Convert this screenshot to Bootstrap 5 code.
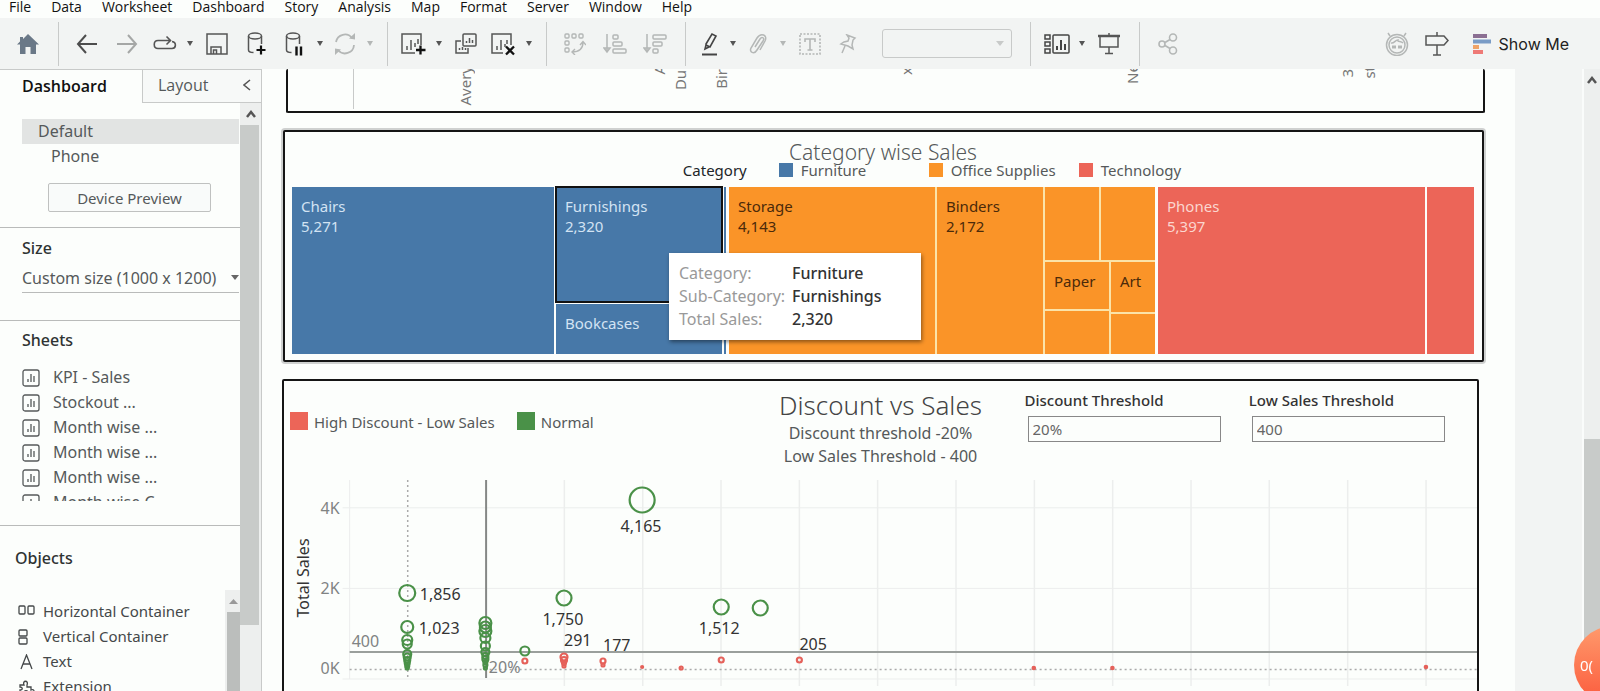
<!DOCTYPE html>
<html lang="en">
<head>
<meta charset="utf-8">
<meta name="viewport" content="width=device-width, initial-scale=1">
<title>Dashboard</title>
<link href="https://cdn.jsdelivr.net/npm/bootstrap@5.3.0/dist/css/bootstrap.min.css" rel="stylesheet">
<style>
:root{--paper:#fcfefc;--chrome:#f2f4f3;--line:#c8cac9;--ink:#55595a;--blue:#4778a8;--orange:#fa9428;--red:#ec6558;--green:#4a9148}
body{font-family:"Noto Sans","Open Sans",sans-serif;font-size:15px;line-height:20px;background:var(--paper);color:var(--ink)}
svg{display:block}
button{font:inherit;color:inherit}
.menu-strip{height:18px;padding-left:9px;gap:20px;font:14px/14px "Open Sans",sans-serif}
.menu-strip a{color:#111;text-decoration:none}
.tool-strip{height:51px;background:var(--chrome);padding-left:8px;color:#555}
.tool-strip button{background:none;border:0;padding:0;height:40px;display:flex;align-items:center;justify-content:center;flex:none}
.w-a{width:40px}.w-b{width:36px}.w-c{width:32px}.w-d{width:14px}
.faded{color:#b4b7b6}
.tool-sep{width:1px;height:44px;background:var(--line);margin:0 8px 0 10px;flex:none}
.caret::after{content:"";border:3px solid transparent;border-top:5px solid currentColor;border-bottom:0}
.tool-select{width:130px;height:29px;margin:0 8px 0 16px;border:1px solid var(--line);border-radius:3px;background:transparent;appearance:none}
.select-box{display:grid;align-items:center}
.select-box>*{grid-area:1/1}
.select-box::after{content:"";grid-area:1/1;justify-self:end;border:4px solid transparent;border-top:5px solid #666;border-bottom:0;pointer-events:none}
.select-box.off::after{border-top-color:#c8cac9;margin-right:16px}
.show-me{padding:0 31px 0 16px!important;gap:8px;font-family:Inter,sans-serif!important;font-size:16px!important;color:#222}
.side{width:262px;border-top:1px solid var(--line);border-right:1px solid var(--line);font-size:16px}
.side-tabs{height:33px;font:16px/24px "Open Sans",sans-serif}
.side-tabs button{background:none;border:0;text-align:left}
.tab-on{width:142px;padding:0 0 2px 22px;font-weight:600!important;color:#111}
.tab-off{background:#f7f9f8!important;border-left:1px solid var(--line)!important;border-bottom:1px solid var(--line)!important;padding:0 10px 2px 15px}
.side-body{width:240px}
.side h2{font-size:16px;line-height:24px;font-weight:500;color:#2f3333;margin:0}
.side section{border-bottom:1px solid #b9bbba}
.head-size{padding:8px 0 0 22px}
.head-sheets{padding:7px 0 0 22px}
.head-objects{padding:20px 0 0 15px}
.dev-part{padding-top:16px}
.dev{height:25px;line-height:25px;width:217px;margin-left:22px;padding-left:16px}
.dev.on{background:#e2e4e3}
.dev.sub{padding-left:29px}
.preview-btn{margin:14px 0 15px 48px;width:163px;height:29px;border:1px solid #bfc1c0;background:#f9fbfa;border-radius:2px;padding:0;font-size:15px}
.size-box{margin:3px 0 27px 22px;width:217px;border-bottom:1px solid #b9bbba}
.size-box select{appearance:none;border:0;background:none;color:inherit;height:29px;padding:0}
.sheet-list{height:136px;overflow:hidden;padding-left:22px;margin:13px 0 24px}
.sheet-list li,.obj-list li{height:25px;line-height:25px;display:flex;align-items:center}
.sheet-list li{gap:13px}
.obj-list{padding-left:18px;flex:1;margin:9px 0 0;font-size:15px}
.obj-list li{gap:7px;color:#444849}
.sbar{width:21px;background:#edefee}
.sbar-up{height:22px;display:flex;align-items:center;justify-content:center;color:#555;background:#edefee}
.sbar-thumb{background:#c8cbc9;width:19px;height:85%}
.inner-bar{width:15px;background:#edefee;padding-left:2px}
.inner-thumb{background:#bbbebc}
.stage{min-width:0;background:var(--paper)}
.sheet-area{min-width:0;padding:0 30px 0 20px}
.gutter{width:69px;background:var(--chrome);border-right:2px solid #fafcfb}
.page-bar{width:16px;background:#edefee}
.page-gap{height:56%}
.page-thumb{background:#c8cbc9}
.panel-a,.panel-b,.panel-c{border:2px solid #151515;border-radius:2px}
.panel-a{height:44px;border-top:0;margin:0 0 0 4px;position:relative;overflow:hidden}
.panel-a .rot{position:absolute;writing-mode:vertical-rl;transform:rotate(180deg);line-height:20px;color:#777}
.panel-a .rule{position:absolute;left:65px;top:0;height:40px;width:1px;background:var(--line)}
.panel-b{margin:17px 1px 17px 1px;box-shadow:0 0 0 2px #cfd1d0;padding:9px 8px 6px 7px;background:var(--paper);position:relative}
.panel-b h2{font-size:21px;line-height:22px;font-weight:300;text-align:center;margin:0}
.legend-b{line-height:20px;margin:-3px 0 7px;justify-content:center;padding-left:98px}
.legend-b .key{gap:8px}
.legend-b .wide{width:150px}
.swatch{width:14px;height:14px;flex:none}
.bg-f{background:var(--blue)}.bg-o{background:var(--orange)}.bg-t{background:var(--red)}.bg-n{background:var(--green)}
.treemap{height:167px;display:grid;grid-template-columns:434fr 426fr 316fr;gap:3px}
.treemap>div,.treemap .cells{display:grid;gap:2px;min-width:0;min-height:0}
.treemap .cell{padding:9px;line-height:20px;overflow:hidden;min-width:0;min-height:0}
.grp-f{grid-template-columns:262fr 166fr 2fr;color:#d3e3f3}
.grp-o{grid-template-columns:206fr 106fr 110fr;color:#4b2a0a;background:#fbe3a8}
.grp-t{grid-template-columns:267fr 47fr;color:#fbd6cf}
.rows-f{grid-template-rows:115fr 50fr}
.rows-o{grid-template-rows:73fr 91fr;background:#fbe3a8}
.two-even{grid-template-columns:1fr 1fr}
.two-odd{grid-template-columns:64fr 44fr}
.rows-p{grid-template-rows:47fr 43fr}
.rows-r{grid-template-rows:50fr 40fr}
.picked{outline:2px solid #111;outline-offset:-1px;z-index:1}
.tip{position:absolute;left:384px;top:121px;width:252px;height:87px;background:#fff;box-shadow:1px 2px 4px rgba(0,0,0,.45);padding:9px 10px;z-index:2;font-size:16px}
.tip dl{display:grid;grid-template-columns:113px 1fr;line-height:23px;margin:0}
.tip dt{font-weight:400;color:#999;white-space:nowrap}.tip dd{margin:0;color:#333;font-weight:500}
.panel-c{margin:0 6px 0 0;height:400px}
.head-c{display:grid;grid-template-columns:1fr 204px 1fr}
.head-c .leg{gap:6px;padding:31px 0 0 6px}
.head-c .leg .swatch{width:18px;height:18px}
.titles{text-align:center;white-space:nowrap;line-height:23px;padding-top:8px;font-size:16px;display:flex;flex-direction:column;align-items:center}
.titles h2{font-size:26px;line-height:33px;font-weight:300;margin:0;color:#444}
.fields{display:grid;grid-template-columns:1fr 1fr;padding:9px 4px 0 42px}
.fields label{display:block;color:#333;font-weight:500;line-height:20px}
.fields input{display:block;margin:6px 0 0 3px;width:calc(100% - 31px);height:26px;border:1px solid #888;border-radius:0;padding:0 4px;color:#666;background:transparent}
#plot{width:100%;height:220px;margin-top:12px;overflow:visible}
#plot text{font-size:16px;fill:#333}
#plot text.dim{fill:#808383}
.rec{position:fixed;right:-52px;bottom:-13px;width:78px;height:78px;border-radius:50%;border:0!important;background:linear-gradient(#ff9a6c,#fb5a3c);color:#fff!important;text-align:left;padding:0 0 0 6px;z-index:5;white-space:nowrap}
</style>
</head>
<body class="vh-100 overflow-hidden d-flex flex-column">
<nav class="menu-strip d-flex flex-shrink-0"><a href="#">File</a><a href="#">Data</a><a href="#">Worksheet</a><a href="#">Dashboard</a><a href="#">Story</a><a href="#">Analysis</a><a href="#">Map</a><a href="#">Format</a><a href="#">Server</a><a href="#">Window</a><a href="#">Help</a></nav>

<div class="tool-strip d-flex align-items-center flex-shrink-0" role="toolbar">
<button class="w-a" aria-label="Home"><svg width="22" height="20" fill="#6a7887"><path d="M11 0 22 10.500H19V20H13.500V13H8.500V20H3V10.500H0L3 7.500V3H6V5z"/></svg></button>
<i class="tool-sep"></i>
<button class="w-a" aria-label="Undo"><svg width="22" height="20" fill="none" stroke="#4d4d4d" stroke-width="2"><path d="M21 10H2M10 1 2 10l8 9"/></svg></button>
<button class="w-a faded" aria-label="Redo"><svg width="22" height="20" fill="none" stroke="#a5a7a6" stroke-width="2"><path d="M1 10h19M12 1l8 9-8 9"/></svg></button>
<button class="w-b" aria-label="Replay"><svg width="24" height="18" fill="none" stroke="currentColor" stroke-width="1.600"><path d="M19 6.500c5 1 4 7 0 7H5c-5 0-5-8 0-8h12M13.500 1.500l4 4-4 4"/></svg></button><button class="w-d caret" aria-label="More"></button>
<button class="w-a" aria-label="Save"><svg width="22" height="22" fill="none" stroke="currentColor" stroke-width="1.500"><path d="M1 1h20v20H1zM5 21v-7h10v7M7.500 21v-4h3v4"/></svg></button>
<button class="w-a" aria-label="New data source"><svg width="20" height="24" fill="none" stroke="currentColor" stroke-width="1.500"><ellipse cx="8" cy="4" rx="6.500" ry="3"/><path d="M1.500 4v14c0 1.500 2 2.500 5 2.500M14.500 4v8"/><path d="M14 13.500v9M9.500 18h9" stroke="#111" stroke-width="2.200"/></svg></button>
<button class="w-b" aria-label="Pause updates"><svg width="20" height="24" fill="none" stroke="currentColor" stroke-width="1.500"><ellipse cx="8" cy="4" rx="6.500" ry="3"/><path d="M1.500 4v14c0 1.500 2 2.500 5 2.500M14.500 4v8"/><path d="M11.500 14.500v9M16 14.500v9" stroke="#111" stroke-width="2.400"/></svg></button><button class="w-d caret" aria-label="More"></button>
<button class="w-b faded" aria-label="Refresh"><svg width="24" height="22" fill="none" stroke="currentColor" stroke-width="1.800"><path d="M3 9a9 9 0 0 1 16-4M21 12a9 9 0 0 1-16 5"/><path d="M16 5.500l6 1V0zM8 16.500l-6-1V22z" fill="currentColor" stroke="none"/></svg></button><button class="w-d caret faded" aria-label="More"></button>
<i class="tool-sep"></i>
<button class="w-b" aria-label="New worksheet"><svg width="26" height="24" fill="none" stroke="currentColor" stroke-width="1.500"><path d="M14 21H1V2h19v11M6 18v-4M10 18V8M14 15v-4M17 12V7" /><path d="M19.500 13.500v9M15 18h9.500" stroke="#111" stroke-width="2.300"/></svg></button><button class="w-d caret" aria-label="More"></button>
<button class="w-a" aria-label="Duplicate"><svg width="24" height="24" fill="none" stroke="currentColor" stroke-width="1.500"><rect x="9" y="2" width="13" height="12" rx="1"/><path d="M7 9H2v12h12v-5M12.500 11V9M15.500 11V6M18.500 11V8M5.500 18v-2M8.500 18v-3M11.500 18v-2"/></svg></button>
<button class="w-b" aria-label="Clear sheet"><svg width="26" height="24" fill="none" stroke="currentColor" stroke-width="1.500"><path d="M12 21H1V2h19v11M6 18v-4M10 18V8M14 15v-3M16 12V8"/><path d="M15 14.500l8 8M23 14.500l-8 8" stroke="#111" stroke-width="2.300"/></svg></button><button class="w-d caret" aria-label="More"></button>
<i class="tool-sep"></i>
<button class="w-a faded" aria-label="Swap"><svg width="22" height="22" fill="none" stroke="currentColor" stroke-width="1.400"><rect x="1" y="1" width="4" height="4" rx="1"/><rect x="8" y="1" width="4" height="4" rx="1"/><rect x="15" y="1" width="4" height="4" rx="1"/><rect x="1" y="8" width="4" height="4" rx="1"/><rect x="1" y="15" width="4" height="4" rx="1"/><path d="M8 19c8 0 11-4 11-10M16 12l3-3.500 3 3.500M11 16l-3 3 3 3"/></svg></button>
<button class="w-a faded" aria-label="Sort ascending"><svg width="24" height="20" fill="none" stroke="currentColor" stroke-width="1.500"><path d="M4 0v17M1 14l3 4 3-4z"/><rect x="10" y="1" width="5" height="4" rx="1"/><rect x="10" y="8" width="9" height="4" rx="1"/><rect x="10" y="15" width="13" height="4" rx="1"/></svg></button>
<button class="w-a faded" aria-label="Sort descending"><svg width="24" height="20" fill="none" stroke="currentColor" stroke-width="1.500"><path d="M4 0v17M1 14l3 4 3-4z"/><rect x="10" y="1" width="13" height="4" rx="1"/><rect x="10" y="8" width="9" height="4" rx="1"/><rect x="10" y="15" width="5" height="4" rx="1"/></svg></button>
<i class="tool-sep"></i>
<button class="w-c" aria-label="Highlight"><svg width="18" height="24" fill="none" stroke="#444" stroke-width="1.600"><path d="M5 12 11 2l4 2-6 11-4-2zM5 13l-1 4 4-2"/><path d="M1 22.500h15" stroke-width="2"/></svg></button><button class="w-d caret" aria-label="More"></button>
<button class="w-b faded" aria-label="Attach"><svg width="20" height="22" fill="none" stroke="currentColor" stroke-width="1.500"><path d="M7 14 12 6c2-3 5-1 3 2l-6 9c-3 5-8 2-6-2l6-10c4-6 11-3 8 3l-5 9"/></svg></button><button class="w-d caret faded" aria-label="More"></button>
<button class="w-a faded" aria-label="Labels"><svg width="22" height="22" fill="none" stroke="currentColor" stroke-width="1.600"><rect x="1" y="1" width="20" height="20" stroke-dasharray="2 1.500"/><path d="M6 9V6h10v3M11 6v11M8.500 17h5"/></svg></button>
<button class="w-b faded" aria-label="Pin"><svg width="18" height="20" fill="none" stroke="currentColor" stroke-width="1.500"><path d="M8 1l8 3-2 2-1 5 1 4-5-3-7-2 3-2 4-1 1-3zM6 12l-3 7"/></svg></button>
<span class="select-box off"><select class="tool-select" aria-label="Fit" disabled></select></span>
<i class="tool-sep"></i>
<button class="w-b" aria-label="Show cards"><svg width="26" height="20" fill="none" stroke="#444" stroke-width="1.500"><rect x="1" y="1" width="5" height="4"/><rect x="1" y="8" width="5" height="4"/><rect x="1" y="15" width="5" height="4"/><rect x="9" y="1" width="16" height="18" rx="1"/><path d="M13 16v-4M17 16V6M21 16v-6" stroke-width="2"/></svg></button><button class="w-d caret" aria-label="More"></button>
<button class="w-a" aria-label="Presentation"><svg width="22" height="22" fill="none" stroke="currentColor" stroke-width="1.500"><path d="M0 3h22" stroke-width="2.500"/><path d="M2 3v11h18V3M11 14v6M7 20.500h8M11 0v3"/></svg></button>
<i class="tool-sep"></i>
<button class="w-a faded" aria-label="Share"><svg width="20" height="22" fill="none" stroke="currentColor" stroke-width="1.600"><circle cx="4" cy="11" r="3"/><circle cx="15" cy="4.500" r="3.500"/><circle cx="15" cy="17.500" r="3.500"/><path d="M7 9.500l5-3M7 12.500l5 3"/></svg></button>
<button class="w-a faded ms-auto" aria-label="Assistant"><svg width="24" height="24" fill="none" stroke="currentColor" stroke-width="1.500"><circle cx="12" cy="13" r="10.500"/><circle cx="12" cy="13" r="8"/><path d="M5 4 3 1M19 4l2-3M6 11c3 1 4-3 7-3-1 2 3 1 5 3"/><path d="M7 15h4M13 15h4" stroke-width="3"/></svg></button>
<button class="w-a" aria-label="Guide"><svg width="24" height="24" fill="none" stroke="currentColor" stroke-width="1.500"><path d="M1 4h18l4 4.500-4 4.500H1zM12 0v4M12 13v10M8 23h8"/></svg></button>
<button class="show-me"><svg width="18" height="20"><path fill="#8b6f92" d="M0 0h14v4H0z"/><path fill="#7a9cc6" d="M0 5.500h18v4H0z"/><path fill="#f0a468" d="M0 11h6v4H0z"/><path fill="#ee7a76" d="M0 16h10v4H0z"/></svg>Show Me</button>
</div>

<div class="d-flex flex-grow-1 overflow-hidden">
<aside class="side d-flex flex-column flex-shrink-0">
<div class="side-tabs d-flex flex-shrink-0"><button class="tab-on">Dashboard</button><button class="tab-off d-flex flex-grow-1 align-items-center justify-content-between">Layout<svg width="8" height="12" fill="none" stroke="#555" stroke-width="1.500"><path d="M7 1 1 6l6 5"/></svg></button></div>
<div class="d-flex flex-grow-1 overflow-hidden">
<div class="side-body d-flex flex-column">
<section class="dev-part"><div class="dev on">Default</div><div class="dev sub">Phone</div><button class="preview-btn">Device Preview</button></section>
<section><h2 class="head-size"><label for="size">Size</label></h2>
<div class="size-box select-box"><select id="size"><option>Custom size (1000 x 1200)</option></select></div></section>
<section><h2 class="head-sheets">Sheets</h2>
<ul class="sheet-list list-unstyled" id="sheets"></ul></section>
<h2 class="head-objects">Objects</h2>
<div class="d-flex flex-grow-1 pt-3 mt-1">
<ul class="obj-list list-unstyled">
<li><svg width="18" height="14" fill="none" stroke="currentColor" stroke-width="1.300"><rect x="1" y="1" width="6" height="8" rx="1"/><rect x="10" y="1" width="6" height="8" rx="1"/></svg>Horizontal Container</li>
<li><svg width="18" height="16" fill="none" stroke="currentColor" stroke-width="1.300"><rect x="1" y="1" width="8" height="6" rx="1"/><rect x="1" y="9" width="8" height="6" rx="1"/></svg>Vertical Container</li>
<li><svg width="18" height="16" fill="none" stroke="currentColor" stroke-width="1.300"><path d="M3 15 8.500 1 14 15M5 10h7"/></svg>Text</li>
<li><svg width="18" height="16" fill="none" stroke="currentColor" stroke-width="1.300"><path d="M2 6h4c-2-5 5-5 3 0v2h4v3c4-2 4 4 0 3h-3c0-3-4-3-4 0H2v-3c3 0 3-3 0-3z"/></svg>Extension</li>
</ul>
<div class="inner-bar d-flex flex-column"><div class="sbar-up"><svg width="9" height="5" fill="#999"><path d="M0 5 4.500 0 9 5z"/></svg></div><div class="inner-thumb flex-grow-1"></div></div>
</div>
</div>
<div class="sbar d-flex flex-column ms-auto"><div class="sbar-up"><svg width="10" height="8" fill="none" stroke="#555" stroke-width="2.500"><path d="M1 7l4-5 4 5"/></svg></div><div class="sbar-thumb"></div></div>
</div>
</aside>

<main class="stage d-flex flex-grow-1 overflow-hidden">
<div class="sheet-area flex-grow-1">
<div class="panel-a" id="axisA"><i class="rule"></i></div>
<section class="panel-b">
<h2>Category wise Sales</h2>
<div class="legend-b d-flex"><span class="text-dark me-4 pe-2">Category</span><span class="key wide d-flex align-items-center"><i class="swatch bg-f"></i>Furniture</span><span class="key wide d-flex align-items-center"><i class="swatch bg-o"></i>Office Supplies</span><span class="key d-flex align-items-center"><i class="swatch bg-t"></i>Technology</span></div>
<div class="treemap">
<div class="grp-f"><div class="cell bg-f">Chairs<br>5,271</div><div class="cells rows-f"><div class="cell bg-f picked">Furnishings<br>2,320</div><div class="cell bg-f">Bookcases</div></div><div class="bg-f"></div></div>
<div class="grp-o"><div class="cell bg-o">Storage<br>4,143</div><div class="cell bg-o">Binders<br>2,172</div>
<div class="cells rows-o"><div class="cells two-even"><i class="bg-o"></i><i class="bg-o"></i></div><div class="cells two-odd"><div class="cells rows-p"><div class="cell bg-o">Paper</div><i class="bg-o"></i></div><div class="cells rows-r"><div class="cell bg-o">Art</div><i class="bg-o"></i></div></div></div></div>
<div class="grp-t"><div class="cell bg-t">Phones<br>5,397</div><div class="bg-t"></div></div>
</div>
<div class="tip" role="tooltip"><dl><dt>Category:</dt><dd>Furniture</dd><dt>Sub-Category:</dt><dd>Furnishings</dd><dt>Total Sales:</dt><dd>2,320</dd></dl></div>
</section>
<section class="panel-c">
<div class="head-c">
<div class="leg d-flex align-items-start"><i class="swatch bg-t"></i><span class="me-3">High Discount - Low Sales</span><i class="swatch bg-n"></i><span>Normal</span></div>
<div class="titles"><h2>Discount vs Sales</h2><span>Discount threshold -20%</span><span>Low Sales Threshold - 400</span></div>
<div class="fields"><div><label for="dt">Discount Threshold</label><input id="dt" value="20%"></div><div><label for="ls">Low Sales Threshold</label><input id="ls" value="400"></div></div>
</div>
<svg id="plot" role="img" aria-label="Total sales by discount"></svg>
</section>
</div>
<div class="gutter flex-shrink-0"></div>
<div class="page-bar flex-shrink-0 d-flex flex-column"><div class="sbar-up"><svg width="10" height="8" fill="none" stroke="#555" stroke-width="2.500"><path d="M1 7l4-5 4 5"/></svg></div><div class="page-gap"></div><div class="page-thumb flex-grow-1"></div></div>
</main>
</div>
<button class="rec" aria-label="Recorder">0(</button>

<script src="https://cdn.jsdelivr.net/npm/bootstrap@5.3.0/dist/js/bootstrap.bundle.min.js"></script>
<script>
// Sheet list in the side panel
const bar='<svg width="18" height="18" fill="none" stroke="currentColor" stroke-width="1.300"><rect x="1" y="1" width="16" height="16" rx="2"/><path d="M6 13v-3M9 13V5M12 13V7"/></svg>';
document.getElementById('sheets').innerHTML=['KPI - Sales','Stockout ...','Month wise ...','Month wise ...','Month wise ...','Month wise C'].map(t=>`<li>${bar}${t}</li>`).join('');

// Rotated category labels of the scrolled-off chart: [text, share of width, distance from the bottom]
document.getElementById('axisA').insertAdjacentHTML('beforeend',
 [['Avery',14,5],['A',30.2,36],['Dui',32,21],['Bir',35.4,22],['x',50.9,36],['Ne',69.8,27],['3',87.8,33],['st',89.6,32]]
 .map(([t,x,b])=>`<span class="rot" style="left:${x}%;bottom:${b}px">${t}</span>`).join(''));

// Scatter plot: x runs in percent of the panel, y in pixels with 40 px per 1K
const W=1191,px=v=>((v+.5)/W*100).toFixed(2)+'%',X=d=>123+d*7.82,Y=s=>189-s*.0403;
let o='';
const ln=(x1,y1,x2,y2,c,w=1,d='')=>o+=`<line x1="${x1}" y1="${y1}" x2="${x2}" y2="${y2}" stroke="${c}" stroke-width="${w}" stroke-dasharray="${d}"/>`;
for(const s of [4000,2000]) ln(px(58),Y(s),'100%',Y(s),'#eceeed');
ln(px(58),199,'100%',199,'#eceeed');
ln(px(65),0,px(65),199,'#eceeed');
for(let d=20;d<=130;d+=10) ln(px(X(d)),0,px(X(d)),206,'#eceeed',1.5);
ln(px(123),0,px(123),199,'#aaa',1.5,'2 3');
ln(px(65),189.5,'100%',189.5,'#aaa',1.5,'2 3');
ln(px(65),172,'100%',172,'#9a9f9c',2);
ln(px(X(10)),0,px(X(10)),198,'#858886',2);
const dot=(x,y,r,c,f='none')=>o+=`<circle cx="${px(x)}" cy="${y}" r="${r}" fill="${f}" stroke="${c}" stroke-width="2.200"/>`;
const G='#4a9148',R='#e5615a';
[[122.5,113,8],[122.5,147,6],[122.5,160,5],[122.5,164,4.5],[122.5,174,4],[122.5,177,3.5],[122.5,180,3],[122.5,183,2.5],[122.5,186,2],[122.5,188,1.5],
 [200.5,143,6],[200.5,147,5.5],[200.5,151,6],[200.5,158,5],[200.5,166,4.5],[200.5,172,4],[200.5,176,3],[200.5,179,3],[200.5,182,2],[200.5,185,2],[200.5,188,1.5],
 [240,171,4.5],[279,118,7.5],[357,20,12.5],[436,127,7.5],[475,128,7.5]].forEach(p=>dot(...p,G));
[[240,181,2.500],[279,177,3.5],[279,180,3],[279,183,2],[279,186,1.5],[318,181,2.5],[318,185,1.500],[357,187,1],[396,188,1.5],[436,180,2.5],[514,180,2.5],[748,188,1.2],[826.500,188,1.2],[1139.500,187,1.2]].forEach(p=>dot(...p,R));
const tx=(x,y,t,a='start',c='')=>o+=`<text x="${px(x)}" y="${y+6}" text-anchor="${a}" class="${c}">${t}</text>`;
tx(135,114,'1,856');tx(134,148,'1,023');tx(356,46,'4,165','middle');tx(278,139,'1,750','middle');tx(434,148,'1,512','middle');
tx(279,160,'291');tx(318,165,'177');tx(514,164,'205');tx(67,161,'400','start','dim');tx(204,187,'20%','start','dim');
tx(55,28,'4K','end','dim');tx(55,108,'2K','end','dim');tx(55,188,'0K','end','dim');
o+='<text transform="translate(25 98) rotate(-90)" text-anchor="middle">Total Sales</text>';
document.getElementById('plot').innerHTML=o;
</script>
</body>
</html>
